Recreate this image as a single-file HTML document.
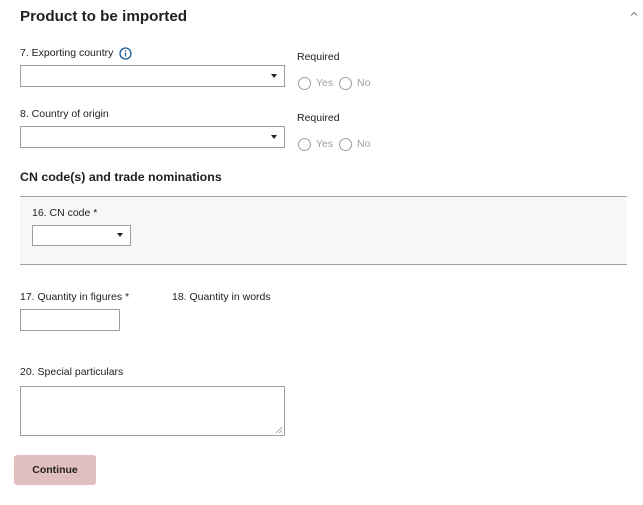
<!DOCTYPE html>
<html><head><style>
body{margin:0;width:643px;height:505px;background:#fff;font-family:"Liberation Sans",sans-serif;color:#212121;position:relative;overflow:hidden}
.a{position:absolute;white-space:nowrap}
.l{font-size:10.5px}
.sel{position:absolute;border:1px solid #9e9e9e;background:#fff;box-sizing:border-box}
.car{position:absolute;width:0;height:0;border-left:3.5px solid transparent;border-right:3.5px solid transparent;border-top:4px solid #222}
.r{position:absolute;width:13px;height:13px;border:1px solid #9e9e9e;border-radius:50%;box-sizing:border-box}
.g{color:#9e9e9e;font-size:10.5px}
</style></head><body>
<div class="a" style="left:20px;top:8px;font-size:15.2px;font-weight:bold">Product to be imported</div>
<svg class="a" style="left:630px;top:11px" width="8" height="6"><path d="M1 4.5L4 1.5L7 4.5" fill="none" stroke="#777" stroke-width="1"/></svg>

<div class="a l" style="left:20px;top:47px">7. Exporting country</div>
<svg class="a" style="left:119px;top:47px" width="13" height="13" viewBox="0 0 13 13"><circle cx="6.5" cy="6.5" r="5.5" fill="none" stroke="#1a5a96" stroke-width="1.3"/><rect x="5.9" y="5.5" width="1.2" height="4" fill="#1a5a96"/><rect x="5.9" y="3.3" width="1.2" height="1.2" fill="#1a5a96"/></svg>
<div class="sel" style="left:20px;top:65px;width:265px;height:22px"><div class="car" style="left:250px;top:8px"></div></div>
<div class="a l" style="left:297px;top:51px">Required</div>
<div class="r" style="left:298px;top:77px"></div><div class="a g" style="left:316px;top:77px">Yes</div>
<div class="r" style="left:339px;top:77px"></div><div class="a g" style="left:357px;top:77px">No</div>

<div class="a l" style="left:20px;top:108px">8. Country of origin</div>
<div class="sel" style="left:20px;top:126px;width:265px;height:22px"><div class="car" style="left:250px;top:8px"></div></div>
<div class="a l" style="left:297px;top:112px">Required</div>
<div class="r" style="left:298px;top:138px"></div><div class="a g" style="left:316px;top:138px">Yes</div>
<div class="r" style="left:339px;top:138px"></div><div class="a g" style="left:357px;top:138px">No</div>

<div class="a" style="left:20px;top:170px;font-size:12.4px;font-weight:bold">CN code(s) and trade nominations</div>
<div class="a" style="left:20px;top:196px;width:607px;height:69px;background:#f7f7f7;border-top:1px solid #a0a0a0;border-bottom:1px solid #a0a0a0;box-sizing:border-box"></div>
<div class="a l" style="left:32px;top:207px">16. CN code *</div>
<div class="sel" style="left:32px;top:225px;width:99px;height:21px"><div class="car" style="left:84px;top:7px"></div></div>

<div class="a l" style="left:20px;top:291px">17. Quantity in figures *</div>
<div class="a l" style="left:172px;top:291px">18. Quantity in words</div>
<div class="sel" style="left:20px;top:309px;width:100px;height:22px"></div>

<div class="a l" style="left:20px;top:366px">20. Special particulars</div>
<div class="sel" style="left:20px;top:386px;width:265px;height:50px">
<svg class="a" style="right:1px;bottom:1px" width="8" height="8"><path d="M7 1L1 7M7 4L4 7M7 6.5L6.5 7" stroke="#999" stroke-width="0.8"/></svg></div>

<div class="a" style="left:14px;top:455px;width:82px;height:30px;background:#e0bfbe;border-radius:3px;font-size:10.5px;font-weight:bold;text-align:center;line-height:31px">Continue</div>
</body></html>
